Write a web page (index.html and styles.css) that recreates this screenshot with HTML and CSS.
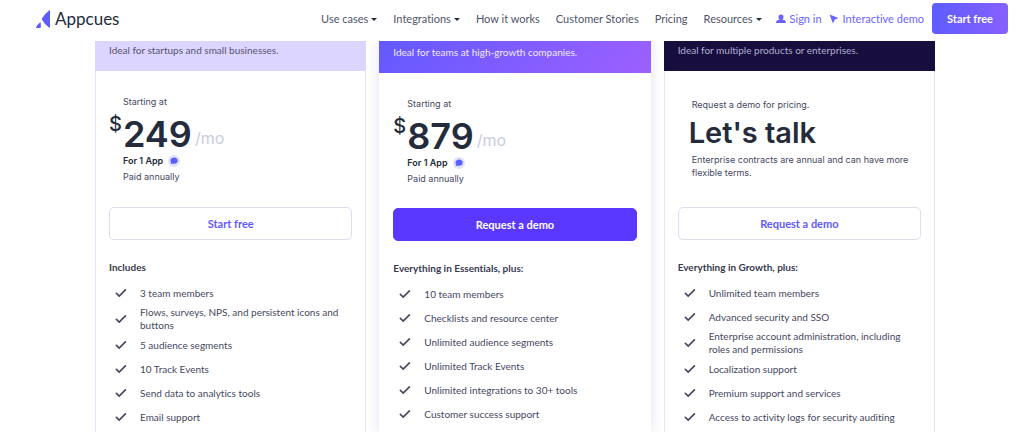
FILE: index.html
```html
<!DOCTYPE html>
<html lang="en">
<head>
    <meta charset="UTF-8">
    <meta name="viewport" content="width=device-width, initial-scale=1.0">
    <title>Pricing | Appcues</title>
    <link rel="stylesheet" href="styles.css">
</head>
<body>
    <!-- shared icons -->
    <svg class="sprite" aria-hidden="true">
        <symbol id="check" viewBox="0 0 12 10">
            <path d="M1.4 5.4 4.2 8 10.4 1.9" fill="none" stroke="currentColor" stroke-width="1.7" stroke-linecap="round"/>
        </symbol>
        <symbol id="chat" viewBox="0 0 12 12">
            <circle cx="6" cy="6" r="6" fill="#dfe2fb"/>
            <path d="M6.1 2.6C8.200 2.600 9.700 3.900 9.700 5.700S8.200 8.800 6.100 8.800c-.5 0-.9-.1-1.300-.2L2.600 9.300l.6-1.700C2.700 7 2.500 6.400 2.500 5.700 2.500 3.900 4 2.600 6.100 2.600z" fill="#5c5cff"/>
        </symbol>
    </svg>

    <header class="header">
        <a class="logo" href="#">
            <svg class="logo-mark" viewBox="0 0 14 18" aria-hidden="true">
                <path d="M13 .4Q14 0 14 1v16q0 1-1 .6Q8 13.5 6.2 10 5.7 9 6.2 8 8 4.5 13 .4z" fill="#5c5cff"/>
                <path d="M4 12.600q.8-.4.800.6v4q0 .8-.8.8H.6q-1 0-.4-.8Q1.500 14.500 4 12.600z" fill="#5c5cff"/>
            </svg>
            <span>Appcues</span>
        </a>
        <nav class="nav">
            <a class="has-menu" href="#">Use cases</a>
            <a class="has-menu" href="#">Integrations</a>
            <a href="#">How it works</a>
            <a href="#">Customer Stories</a>
            <a href="#">Pricing</a>
            <a class="has-menu" href="#">Resources</a>
        </nav>
        <div class="account">
            <a href="#">
                <svg width="10" height="10" viewBox="0 0 10 10" aria-hidden="true">
                    <path d="M5 .5a2.5 2.5 0 0 1 2.5 2.6c0 1-.4 1.9-1 2.5C8.5 6 10 7 10 9H0C0 7 1.5 6 3.5 5.6c-.6-.6-1-1.500-1-2.500A2.500 2.500 0 0 1 5 .5z" fill="currentColor"/>
                </svg>
                Sign in
            </a>
            <a href="#">
                <svg width="10" height="10" viewBox="0 0 10 10" aria-hidden="true">
                    <path d="M.5.5 9.5 4 5.8 5.5 4 9.4z" fill="currentColor"/>
                </svg>
                Interactive demo
            </a>
        </div>
        <button class="btn-start" type="button">Start free</button>
    </header>

    <main class="plans">
        <section class="plan plan-essentials">
            <p class="plan-head">Ideal for startups and small businesses.</p>
            <div class="plan-body">
                <div class="plan-price">
                    <p class="note">Starting at</p>
                    <p class="price"><span class="currency">$</span><span class="amount">249</span><span class="period">/mo</span></p>
                    <p class="note apps">For 1 App <svg width="12" height="12"><use href="#chat"/></svg></p>
                    <p class="note">Paid annually</p>
                </div>
                <button class="btn" type="button">Start free</button>
                <h2>Includes</h2>
                <ul class="features">
                    <li><svg class="check"><use href="#check"/></svg>3 team members</li>
                    <li><svg class="check"><use href="#check"/></svg>Flows, surveys, NPS, and persistent icons and buttons</li>
                    <li><svg class="check"><use href="#check"/></svg>5 audience segments</li>
                    <li><svg class="check"><use href="#check"/></svg>10 Track Events</li>
                    <li><svg class="check"><use href="#check"/></svg>Send data to analytics tools</li>
                    <li><svg class="check"><use href="#check"/></svg>Email support</li>
                </ul>
            </div>
        </section>

        <section class="plan plan-growth">
            <p class="plan-head">Ideal for teams at high-growth companies.</p>
            <div class="plan-body">
                <div class="plan-price">
                    <p class="note">Starting at</p>
                    <p class="price"><span class="currency">$</span><span class="amount">879</span><span class="period">/mo</span></p>
                    <p class="note apps">For 1 App <svg width="12" height="12"><use href="#chat"/></svg></p>
                    <p class="note">Paid annually</p>
                </div>
                <button class="btn btn-primary" type="button">Request a demo</button>
                <h2>Everything in Essentials, plus:</h2>
                <ul class="features">
                    <li><svg class="check"><use href="#check"/></svg>10 team members</li>
                    <li><svg class="check"><use href="#check"/></svg>Checklists and resource center</li>
                    <li><svg class="check"><use href="#check"/></svg>Unlimited audience segments</li>
                    <li><svg class="check"><use href="#check"/></svg>Unlimited Track Events</li>
                    <li><svg class="check"><use href="#check"/></svg>Unlimited integrations to 30+ tools</li>
                    <li><svg class="check"><use href="#check"/></svg>Customer success support</li>
                </ul>
            </div>
        </section>

        <section class="plan plan-enterprise">
            <p class="plan-head">Ideal for multiple products or enterprises.</p>
            <div class="plan-body">
                <div class="plan-price">
                    <p class="note">Request a demo for pricing.</p>
                    <p class="talk">Let's talk</p>
                    <p class="note terms">Enterprise contracts are annual and can have more flexible terms.</p>
                </div>
                <button class="btn" type="button">Request a demo</button>
                <h2>Everything in Growth, plus:</h2>
                <ul class="features">
                    <li><svg class="check"><use href="#check"/></svg>Unlimited team members</li>
                    <li><svg class="check"><use href="#check"/></svg>Advanced security and SSO</li>
                    <li><svg class="check"><use href="#check"/></svg>Enterprise account administration, including roles and permissions</li>
                    <li><svg class="check"><use href="#check"/></svg>Localization support</li>
                    <li><svg class="check"><use href="#check"/></svg>Premium support and services</li>
                    <li><svg class="check"><use href="#check"/></svg>Access to activity logs for security auditing</li>
                </ul>
            </div>
        </section>
    </main>
</body>
</html>
```

FILE: styles.css
```css
* {
    box-sizing: border-box;
}

body {
    margin: 0;
    min-height: 100vh;
    display: flex;
    flex-direction: column;
    background-color: #fff;
    color: #45485f;
    font-family: Lato, "Open Sans", sans-serif;
    font-size: 11px;
    line-height: 14px;
    font-variant-ligatures: none;
}

p,
h2,
ul {
    margin: 0;
    padding: 0;
}

a {
    color: inherit;
    text-decoration: none;
}

button {
    font-family: inherit;
    font-size: 11px;
    font-weight: bold;
    cursor: pointer;
}

.sprite {
    position: absolute;
    width: 0;
    height: 0;
}

/* header */
.header {
    position: sticky;
    top: 0;
    z-index: 1;
    display: flex;
    align-items: center;
    height: 41px;
    padding: 0 16px 4px 36px;
    background-color: #fff;
    white-space: nowrap;
}

.logo {
    display: flex;
    align-items: center;
    gap: 5px;
    color: #242b3a;
    font-size: 17px;
    line-height: 20px;
}

.logo-mark {
    width: 14px;
    height: 18px;
}

.nav {
    display: flex;
    gap: 16px;
    margin-left: auto;
    color: #505468;
}

.has-menu::after {
    content: "";
    display: inline-block;
    margin-left: 3px;
    border: 3px solid transparent;
    border-top-color: #242b3a;
    border-bottom: 0;
    vertical-align: 2px;
}

.account {
    display: flex;
    gap: 7px;
    margin-left: 14px;
    color: #6a63ff;
}

.account a {
    display: flex;
    align-items: center;
    gap: 4px;
}

.btn-start {
    width: 76px;
    height: 31px;
    margin-left: 8px;
    padding: 0;
    border: 0;
    border-radius: 4px;
    background: linear-gradient(100deg, #5c5cff, #8960ff);
    color: #fff;
}

/* plans */
.plans {
    flex: 1;
    display: grid;
    grid-template-columns: repeat(3, 1fr);
    gap: 13px;
    padding: 0 89px 0 95px;
}

.plan {
    border: 1px solid #e4e6f3;
    border-width: 0 1px;
}

.plan-head {
    height: 30px;
    margin: 0 -1px;
    padding: 2px 14px 0;
    font-size: 10px;
}

.plan-essentials .plan-head {
    background-color: #dcd5ff;
    color: #565470;
}

.plan-growth {
    border: 0;
    box-shadow: 0 0 12px rgba(70, 80, 160, 0.16);
}

.plan-growth .plan-head {
    height: 32px;
    margin: 0;
    padding-top: 4px;
    background: linear-gradient(135deg, #6259ff, #9e60ff);
    color: #f0eaff;
}

.plan-enterprise .plan-head {
    background-color: #170e3e;
    color: #b1afd0;
}

.plan-body {
    padding: 23px 13px 0;
}

.plan-growth .plan-body {
    padding: 23px 14px 0;
}

/* price block */
.plan-price {
    height: 113px;
}

.plan-growth .plan-price {
    height: 112px;
}

.note {
    padding-left: 14px;
    font-family: Inter, sans-serif;
    font-size: 9px;
    line-height: 16px;
}

.price {
    display: flex;
    height: 43px;
    color: #242b3a;
    font-family: Inter, sans-serif;
    line-height: 48px;
}

.currency {
    width: 14px;
    font-size: 20px;
    font-weight: 500;
    line-height: 28px;
}

.amount {
    font-size: 36px;
    font-weight: 600;
}

.period {
    margin-left: 3px;
    color: #c8cce0;
    font-size: 16px;
    line-height: 56px;
}

.apps {
    display: flex;
    align-items: center;
    gap: 5px;
    color: #242b3a;
    font-weight: 600;
}

.plan-enterprise .plan-price {
    padding-top: 3px;
}

.talk {
    padding-left: 11px;
    color: #242b3a;
    font-family: Inter, sans-serif;
    font-size: 29px;
    font-weight: 600;
    line-height: 40px;
}

.terms {
    line-height: 13px;
}

.btn {
    display: block;
    width: 100%;
    height: 33px;
    border: 1px solid #dcdef0;
    border-radius: 5px;
    background-color: #fff;
    color: #6259ff;
}

.btn-primary {
    border-color: #5a38ff;
    background-color: #5a38ff;
    color: #fff;
}

/* feature list */
h2 {
    margin: 20px 0 8px;
    color: #37394f;
    font-size: 10px;
    font-weight: bold;
    line-height: 14px;
}

.features {
    display: grid;
    gap: 2px;
    list-style: none;
    font-size: 10px;
    line-height: 13px;
}

.features li {
    display: flex;
    align-items: center;
    gap: 13px;
    min-height: 22px;
    padding-left: 6px;
}

.check {
    flex: none;
    width: 12px;
    height: 10px;
    color: #45485f;
}
```
